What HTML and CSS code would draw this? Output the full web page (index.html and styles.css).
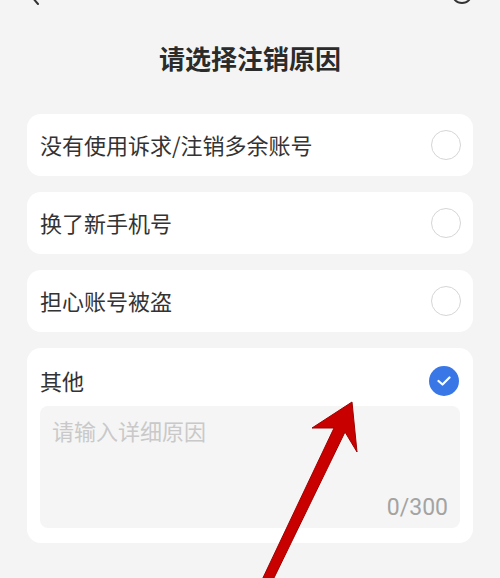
FILE: index.html
```html
<!DOCTYPE html>
<html lang="zh-CN">
<head>
  <meta charset="UTF-8" />
  <title>注销原因</title>
  <link rel="stylesheet" href="styles.css">
</head>
<body>

  <div class="top-bar">
    <svg class="back" width="14" height="6" viewBox="0 0 14 6">
      <path d="M2 -3 L8 4" stroke="#333" stroke-width="2" fill="none" stroke-linecap="round" />
    </svg>
    <svg class="help" width="24" height="6" viewBox="0 0 24 6">
      <circle cx="12" cy="-7" r="10" stroke="#333" stroke-width="1.8" fill="none" />
    </svg>
  </div>

  <h1 class="title">请选择注销原因</h1>

  <div class="reasons">
    <div class="reason">
      <span class="label">没有使用诉求/注销多余账号</span>
      <span class="radio"></span>
    </div>
    <div class="reason">
      <span class="label">换了新手机号</span>
      <span class="radio"></span>
    </div>
    <div class="reason">
      <span class="label">担心账号被盗</span>
      <span class="radio"></span>
    </div>
    <div class="reason other">
      <div class="other-head">
        <span class="label">其他</span>
        <span class="radio checked">
          <svg width="14" height="10" viewBox="0 0 14 10">
            <path d="M1.5 5 L5.5 8.5 L12.5 1.5" stroke="#fff" stroke-width="2.2" fill="none" stroke-linecap="round" stroke-linejoin="round" />
          </svg>
        </span>
      </div>
      <div class="input-box">
        <textarea placeholder="请输入详细原因"></textarea>
        <div class="count">0/300</div>
      </div>
    </div>
  </div>

  <!-- annotation arrow drawn over the screenshot -->
  <svg class="arrow" width="500" height="578" viewBox="0 0 500 578">
    <polygon points="261,582 272,582 345,432 357,452 352,402 312,428 334,428" fill="#c80000" stroke="#a00000" stroke-width="1" stroke-linejoin="round" />
  </svg>

</body>
</html>
```

FILE: styles.css
```css
body {
  margin: 0;
  width: 500px;
  height: 578px;
  overflow: hidden;
  position: relative;
  background: #f4f4f4;
  font-family: "Noto Sans CJK SC", "Noto Sans", sans-serif;
  color: #333;
}

.top-bar {
  height: 6px;
  display: flex;
  justify-content: space-between;
  padding: 0 26px 0 30px;
}

.title {
  margin: 34px 0 38px;
  font-size: 26px;
  line-height: 36px;
  font-weight: bold;
  text-align: center;
  color: #2b2b2b;
}

.reasons {
  display: flex;
  flex-direction: column;
  gap: 16px;
  margin: 0 27px;
}

.reason {
  background: #fff;
  border-radius: 14px;
  height: 62px;
  padding: 0 12px 0 13px;
  display: flex;
  align-items: center;
  justify-content: space-between;
}

.label {
  font-size: 22px;
  line-height: 30px;
  padding-bottom: 3px;
}

.radio {
  width: 30px;
  height: 30px;
  box-sizing: border-box;
  border: 1.5px solid #d6d6d6;
  border-radius: 50%;
  display: flex;
  align-items: center;
  justify-content: center;
}

.radio.checked {
  border: none;
  background: #3a77e6;
}

.reason.other {
  height: auto;
  display: block;
  padding: 0 13px 15px;
}

.other-head {
  display: flex;
  align-items: center;
  justify-content: space-between;
  padding: 18px 1px 10px 0;
  height: 30px;
}

.input-box {
  height: 122px;
  box-sizing: border-box;
  background: #f5f5f5;
  border-radius: 8px;
  padding: 9px 12px 5px;
  display: flex;
  flex-direction: column;
}

.input-box textarea {
  flex: 1;
  border: none;
  outline: none;
  resize: none;
  background: transparent;
  padding: 0;
  font-family: inherit;
  font-size: 22px;
  line-height: 30px;
  color: #333;
}

.input-box textarea::placeholder {
  color: #c9c9c9;
}

.count {
  text-align: right;
  font-family: Roboto, "Noto Sans", sans-serif;
  font-size: 23px;
  line-height: 30px;
  color: #a3a3a3;
}

.arrow {
  position: absolute;
  left: 0;
  top: 0;
  pointer-events: none;
}
```
